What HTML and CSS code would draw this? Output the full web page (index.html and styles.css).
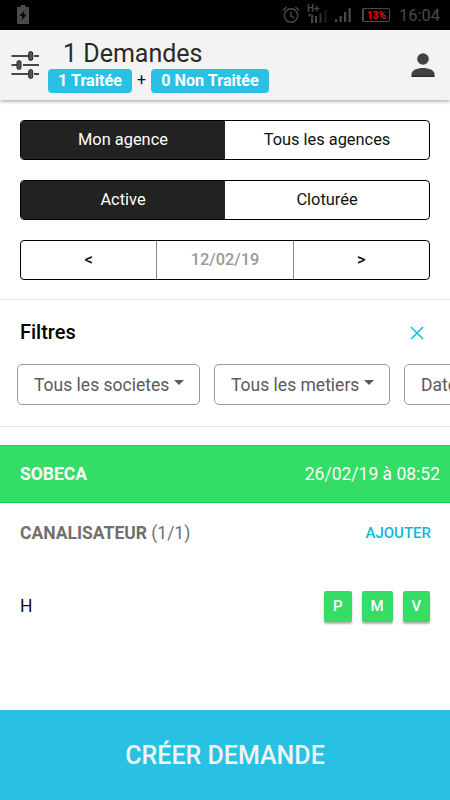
FILE: index.html
```
<!DOCTYPE html>
<html lang="fr">
<head>
    <meta charset="UTF-8">
    <meta name="viewport" content="width=device-width, initial-scale=1.0">
    <title>Demandes</title>
    <link rel="stylesheet" href="styles.css">
</head>
<body>
    <div class="status-bar">
        <svg class="charging" width="12" height="19" viewBox="0 0 12 19">
            <path fill="#4a4a4a" d="M3.500 0h5v2H12v17H0V2h3.500z"/>
            <path fill="#000" d="M7.500 5.500L2.500 11h3L4.500 15.500 9.500 9.500h-3z"/>
        </svg>
        <svg class="alarm" width="18" height="18" viewBox="0 0 18 18" fill="none" stroke="#4a4a4a" stroke-width="1.400">
            <circle cx="9" cy="9.500" r="6.700"/>
            <path d="M9 5.500v4.500l3.500 2M1 4.500L4.500 1M17 4.500L13.500 1"/>
        </svg>
        <div class="network">
            <span>H+</span>
            <svg width="20" height="10" viewBox="0 0 20 10">
                <path fill="#4a4a4a" d="M1 0h3.500L2.700 3zM3.500 3.500L5.200 0 7 3.500zM4 4h2v5H4zM8 2h2v7H8z"/>
                <path fill="#333" d="M12.500-1h2V9h-2z"/>
                <path fill="#1e1e1e" d="M17.500-4h2V9h-2z"/>
            </svg>
        </div>
        <svg class="signal" width="17" height="14" viewBox="0 0 17 14" fill="#4a4a4a">
            <path d="M0 11h2.200v3H0zM4.500 8h2.200v6H4.500zM9 4h2.200v10H9zM13.500 0h2.200v14h-2.200z"/>
        </svg>
        <div class="battery">13%</div>
        <span class="time">16:04</span>
    </div>

    <header>
        <svg class="tune" width="28" height="28" viewBox="0 0 28 28">
            <path stroke="#111" stroke-width="1.600" d="M0.500 5h17M23 5h5M0.500 14h6M12 14h16M0.500 23h17M23 23h5"/>
            <g fill="#555" stroke="#222">
                <rect x="17.700" y="0.700" width="4" height="8.600" rx="1.500"/>
                <rect x="6" y="9.700" width="4" height="8.600" rx="1.500"/>
                <rect x="17.700" y="18.700" width="4" height="8.600" rx="1.500"/>
            </g>
        </svg>
        <div class="heading">
            <h1>1 Demandes</h1>
            <div class="badges">
                <span class="badge">1 Traitée</span>
                <span class="plus">+</span>
                <span class="badge badge-wide">0 Non Traitée</span>
            </div>
        </div>
        <svg class="user" width="24" height="24" viewBox="0 0 24 24" fill="#424242">
            <circle cx="12" cy="6" r="5.800"/>
            <path d="M0.500 23.500V21c0-3.800 5.500-6 11.500-6s11.500 2.200 11.500 6v2.500z"/>
            <path stroke="#111" d="M0.500 23.300h23"/>
        </svg>
    </header>

    <main>
        <div class="switches">
            <div class="segment">
                <button class="active">Mon agence</button>
                <button>Tous les agences</button>
            </div>
            <div class="segment">
                <button class="active">Active</button>
                <button>Cloturée</button>
            </div>
            <div class="segment date-picker">
                <button>&lt;</button>
                <button class="date">12/02/19</button>
                <button>&gt;</button>
            </div>
        </div>

        <section class="filters">
            <div class="filters-head">
                <h2>Filtres</h2>
                <svg class="close" width="14" height="14" viewBox="0 0 14 14">
                    <path stroke="#0fbfe2" stroke-width="1.600" d="M1 1l12 12M13 1L1 13"/>
                </svg>
            </div>
            <div class="filter-list">
                <button class="select societes">Tous les societes<i class="caret"></i></button>
                <button class="select metiers">Tous les metiers<i class="caret"></i></button>
                <button class="select dates">Date<i class="caret"></i></button>
            </div>
        </section>

        <section class="demande">
            <div class="company">
                <strong>SOBECA</strong>
                <span>26/02/19 à 08:52</span>
            </div>
            <div class="job">
                <span><strong>CANALISATEUR</strong> (1/1)</span>
                <a href="#" class="add">AJOUTER</a>
            </div>
            <div class="worker">
                <span>H</span>
                <div class="actions">
                    <button>P</button>
                    <button class="wide">M</button>
                    <button>V</button>
                </div>
            </div>
        </section>
    </main>

    <button class="create-btn">CRÉER DEMANDE</button>
</body>
</html>
```
FILE: styles.css
```
* {
    margin: 0;
    padding: 0;
    box-sizing: border-box;
    font-family: Roboto, sans-serif;
}

body {
    height: 800px;
    display: flex;
    flex-direction: column;
    background: #fff;
    color: #111;
    overflow: hidden;
}

button {
    background: none;
    border: none;
    color: inherit;
}

svg {
    display: block;
    flex-shrink: 0;
}

.status-bar {
    height: 30px;
    flex-shrink: 0;
    display: flex;
    align-items: center;
    padding: 0 10px 0 17px;
    background: #000;
    color: #4a4a4a;
}

.charging {
    margin-bottom: 2px;
}

.alarm {
    margin-left: auto;
}

.network {
    width: 20px;
    margin: 0 0 2px 7px;
}

.network span {
    display: block;
    font-size: 10px;
    font-weight: bold;
    line-height: 10px;
}

.network svg {
    overflow: visible;
}

.signal {
    margin-left: 8px;
}

.battery {
    width: 28px;
    height: 14px;
    margin-left: 10px;
    border: 1px solid #4a4a4a;
    border-left-width: 2px;
    border-radius: 2px;
    color: #f00;
    font-size: 10px;
    font-weight: bold;
    line-height: 13px;
    text-align: center;
}

.time {
    margin-left: 9px;
    font-size: 16.500px;
}

header {
    height: 70px;
    flex-shrink: 0;
    display: flex;
    align-items: center;
    padding: 0 15px 0 11px;
    background: #f3f3f3;
    box-shadow: 0 1px 4px rgba(0,0,0,0.4);
}

.heading {
    margin-left: 9px;
}

h1 {
    padding: 7px 0 0 15px;
    font-size: 25px;
    font-weight: 400;
    line-height: 32px;
    color: #2a2a2a;
}

.badges {
    display: flex;
    align-items: center;
    margin: -1px 0 7px;
}

.badge {
    width: 84px;
    height: 24px;
    border-radius: 4px;
    background: #29c1e3;
    color: #fff;
    font-size: 16.200px;
    font-weight: bold;
    line-height: 23px;
    text-align: center;
}

.badge-wide {
    width: 118px;
}

.plus {
    width: 19px;
    margin-top: -2px;
    font-size: 16px;
    text-align: center;
}

.user {
    margin-left: auto;
}

main {
    flex: 1;
}

.switches {
    display: flex;
    flex-direction: column;
    gap: 20px;
    padding: 20px 20px 19px;
    border-bottom: 1px solid #e4e4e4;
}

.segment {
    height: 40px;
    display: flex;
    border: 1px solid #000;
    border-radius: 4px;
    overflow: hidden;
}

.segment button {
    flex: 1;
    padding-bottom: 2px;
    font-size: 16.400px;
}

.segment .active {
    background: #222;
    color: #fff;
}

.date-picker button {
    font-weight: 500;
}

.date-picker .date {
    border: solid #888;
    border-width: 0 1px;
    color: #999;
}

.filters {
    height: 127px;
    padding: 20px 0 0 20px;
    border-bottom: 1px solid #e4e4e4;
}

.filters-head {
    display: flex;
    justify-content: space-between;
    align-items: center;
    padding-right: 26px;
}

h2 {
    font-size: 20px;
    font-weight: 500;
    line-height: 24px;
    color: #000;
}

.close {
    margin-top: 2px;
}

.filter-list {
    display: flex;
    gap: 14px;
    margin: 20px 0 0 -3px;
    overflow: hidden;
}

.select {
    height: 41px;
    flex-shrink: 0;
    display: flex;
    align-items: center;
    padding-left: 16px;
    border: 1px solid #999;
    border-radius: 5px;
    color: #5a5a5a;
    font-size: 17.500px;
}

.societes {
    width: 183px;
}

.metiers {
    width: 176px;
}

.dates {
    width: 120px;
}

.caret {
    margin: -4px 0 0 5px;
    border: 5px solid transparent;
    border-top-color: #5a5a5a;
    border-bottom: none;
}

.demande {
    margin-top: 18px;
}

.company {
    height: 58px;
    display: flex;
    justify-content: space-between;
    align-items: center;
    padding: 0 10px 0 20px;
    background: #33dd66;
    border: solid #13d650;
    border-width: 1px 0;
    color: #fff;
    font-size: 17.500px;
}

.job {
    height: 59px;
    display: flex;
    justify-content: space-between;
    align-items: center;
    padding: 0 19px 0 20px;
    color: #707070;
    font-size: 17.500px;
}

.add {
    color: #0fb8dc;
    font-size: 15px;
    font-weight: 500;
    text-decoration: none;
}

.worker {
    height: 88px;
    display: flex;
    justify-content: space-between;
    align-items: center;
    padding: 0 20px;
    font-size: 17.500px;
}

.actions {
    display: flex;
    gap: 10px;
}

.actions button {
    width: 27.500px;
    height: 31px;
    border-radius: 2px;
    background: #33dd66;
    box-shadow: 0 2px 2px rgba(0,0,0,0.3);
    color: #fff;
    font-size: 15px;
    font-weight: 500;
}

.actions .wide {
    width: 31px;
}

.create-btn {
    height: 90px;
    flex-shrink: 0;
    background: #29c1e3;
    color: #f3f3f3;
    font-size: 25px;
    font-weight: 500;
}
```
